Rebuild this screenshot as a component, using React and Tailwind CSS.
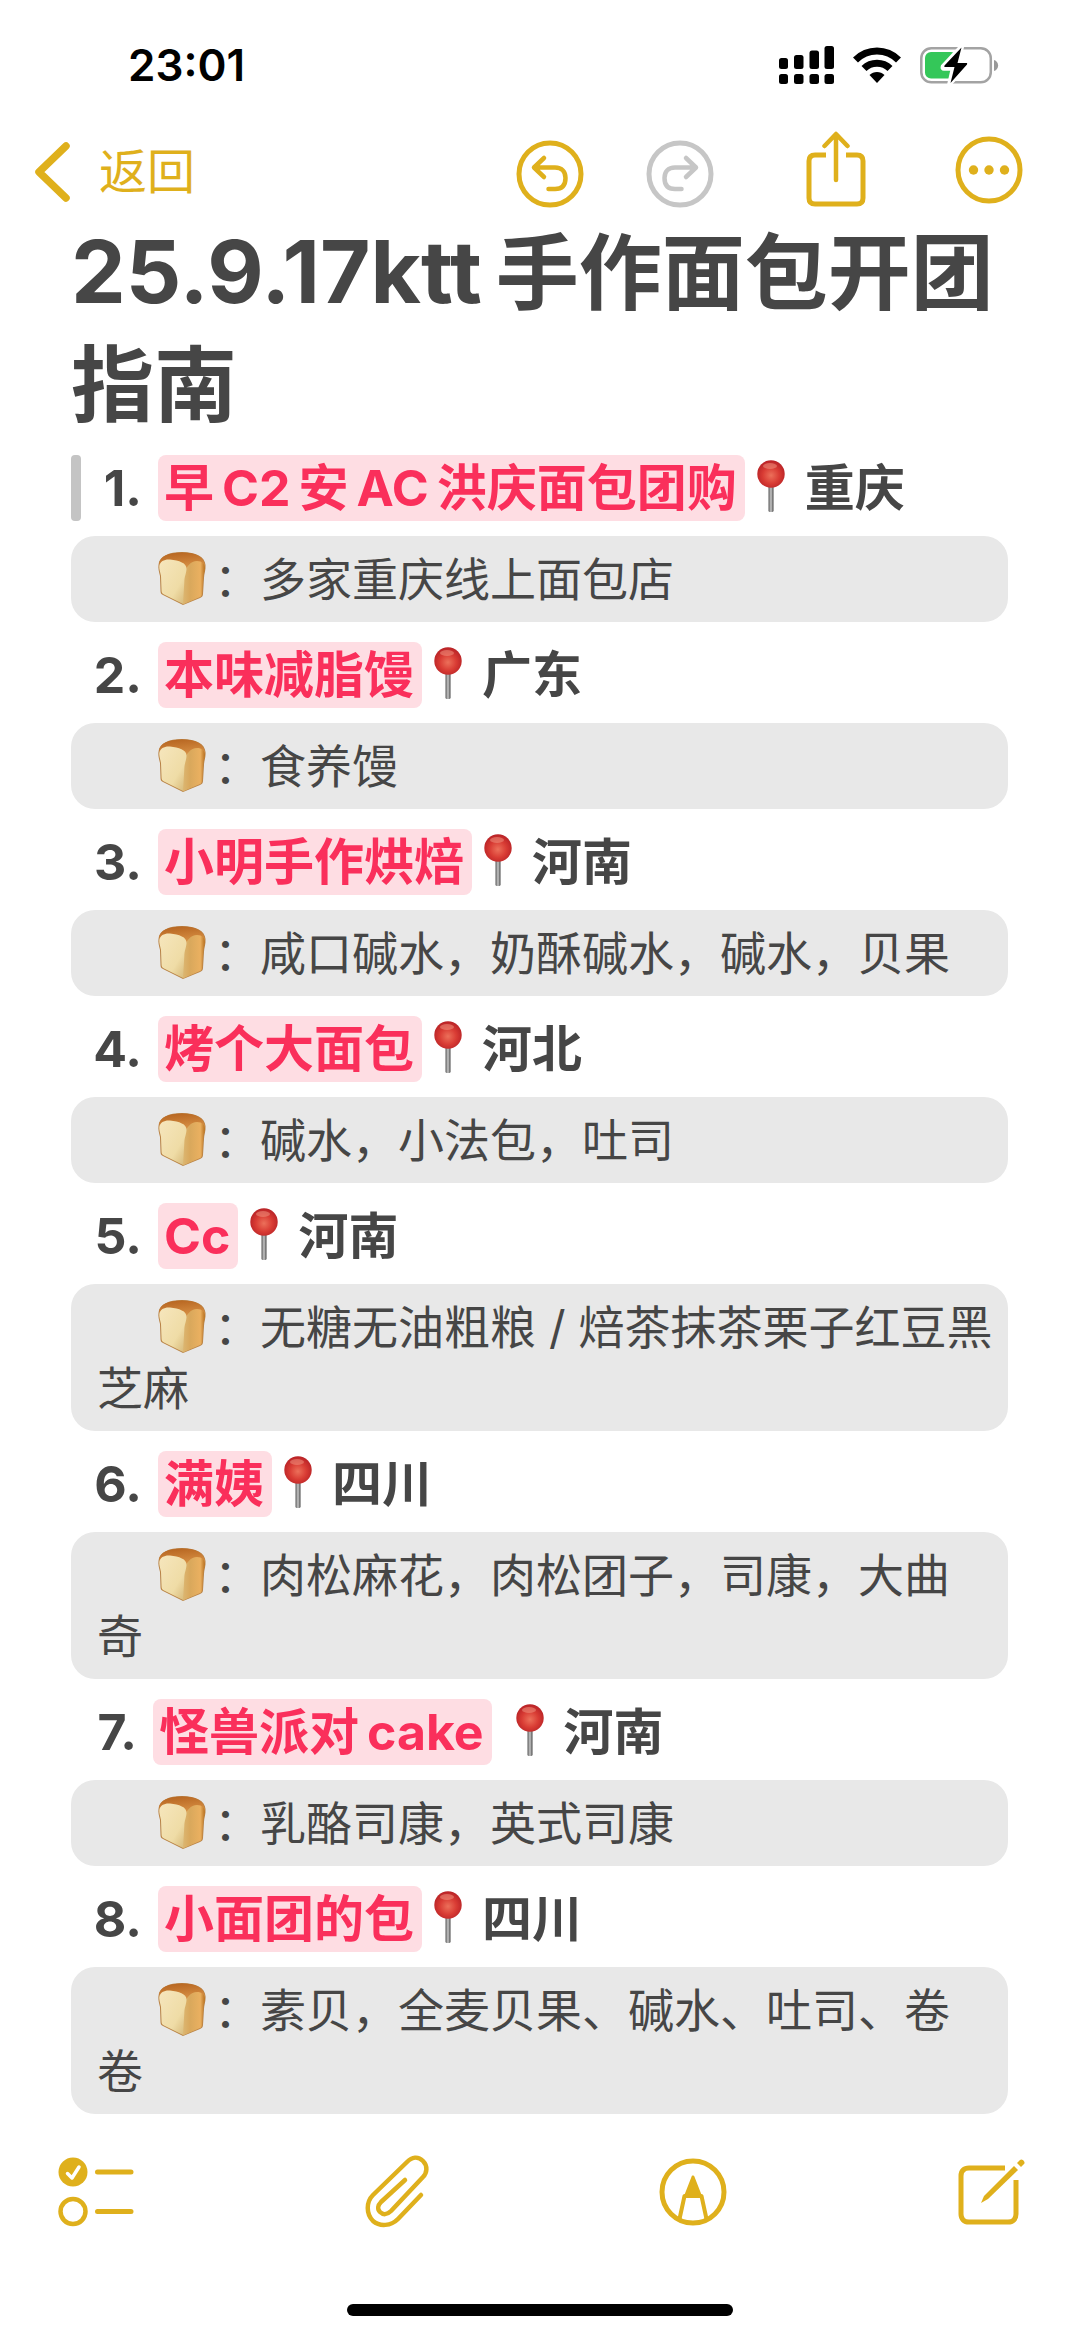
const GOLD = "#dfb01c";

const items = [
  { name: ["早", "C2", "安", "AC", "洪庆面包团购"], place: "重庆", text: "多家重庆线上面包店", quoted: true },
  { name: ["本味减脂馒"], place: "广东", text: "食养馒" },
  { name: ["小明手作烘焙"], place: "河南", text: "咸口碱水，奶酥碱水，碱水，贝果" },
  { name: ["烤个大面包"], place: "河北", text: "碱水，小法包，吐司" },
  { name: ["Cc"], place: "河南", text: "无糖无油粗粮 / 焙茶抹茶栗子红豆黑芝麻" },
  { name: ["满姨"], place: "四川", text: "肉松麻花，肉松团子，司康，大曲奇" },
  { name: ["怪兽派对", "cake"], place: "河南", text: "乳酪司康，英式司康", spaced: true },
  { name: ["小面团的包"], place: "四川", text: "素贝，全麦贝果、碱水、吐司、卷卷" },
];

function Defs() {
  return (
    <svg width="0" height="0" className="absolute" aria-hidden="true">
      <defs>
        <radialGradient id="ball" cx="0.5" cy="0.55" r="0.55">
          <stop offset="0" stopColor="#ec705a" />
          <stop offset="0.55" stopColor="#d93c34" />
          <stop offset="1" stopColor="#b82226" />
        </radialGradient>
        <linearGradient id="needle" x1="0" x2="1" y1="0" y2="0">
          <stop offset="0" stopColor="#555" />
          <stop offset="0.5" stopColor="#c8c8c8" />
          <stop offset="1" stopColor="#444" />
        </linearGradient>
        <linearGradient id="crumb" x1="0" x2="1" y1="0" y2="1">
          <stop offset="0" stopColor="#f6e6bd" />
          <stop offset="0.65" stopColor="#efdca6" />
          <stop offset="1" stopColor="#d4b574" />
        </linearGradient>
        <linearGradient id="side" x1="0" x2="1" y1="0" y2="0">
          <stop offset="0" stopColor="#dcb874" />
          <stop offset="0.35" stopColor="#d9a85c" />
          <stop offset="0.8" stopColor="#eab060" />
          <stop offset="1" stopColor="#b8701f" />
        </linearGradient>
        <linearGradient id="crust" x1="0" x2="0.2" y1="0" y2="1">
          <stop offset="0" stopColor="#b4621e" />
          <stop offset="0.5" stopColor="#cc8138" />
          <stop offset="1" stopColor="#e2a656" />
        </linearGradient>
      </defs>
    </svg>
  );
}

function Pin() {
  return (
    <svg viewBox="0 0 28 52" className="mr-5 mb-1 ml-3 h-[52px] w-7 shrink-0" role="img" aria-label="📍">
      <rect x="11.5" y="26" width="5" height="26" rx="1.5" fill="url(#needle)" />
      <circle cx="14" cy="14" r="13.7" fill="url(#ball)" />
      <ellipse cx="13" cy="6" rx="7" ry="3" fill="#f19a86" opacity="0.5" />
    </svg>
  );
}

function Bread() {
  return (
    <svg viewBox="0 0 48 53" className="mr-2 ml-[61px] inline-block h-[53px] w-12 align-[-9px]" role="img" aria-label="🍞">
      <path d="M0.500 13C1 4 11 0 24 0C38 0 47 5 47.500 13C48 18 46 22 46 26L45 42C45 44 44 45 42 46L25 53L5 43C3 42 2.500 41 2.500 39L2 24C1 20 0 16 0.500 13Z" fill="#b88245" />
      <path d="M1 12C2 4 11 0.500 24 0.500C38 0.500 46 5 46.800 13L46 20L28 24L14 12Z" fill="url(#crust)" />
      <path d="M26 24C27 15 33 9 39 9C44 9 47.500 12 46.800 17C46 21 45.300 23 45.200 26L44.200 42C44 44 43 45 41 45.500L25 52.500L24 30Z" fill="url(#side)" />
      <path d="M1.300 14C2 9 7 7 12 7.500C21 8.500 29 11 28.500 17C28.200 22 26.500 24 26.300 30L25 52L6 42.500C4 41.500 3.500 40 3.500 38L3 24C2.300 20 1 17 1.300 14Z" fill="url(#crumb)" />
    </svg>
  );
}

function StatusIcons() {
  return (
    <div className="flex items-center gap-[19px]">
      <svg width="55" height="38" viewBox="0 0 55 38" role="img" aria-label="信号">
        <rect x="0" y="12" width="9" height="11" rx="2.500" />
        <rect x="15" y="9" width="9.500" height="14" rx="2.500" />
        <rect x="30.500" y="4.500" width="9.500" height="18.500" rx="2.500" />
        <rect x="45.500" y="0" width="9.500" height="23" rx="2.500" />
        <rect x="0" y="28" width="9" height="10" rx="2.500" />
        <rect x="15" y="28" width="9.500" height="10" rx="2.500" />
        <rect x="30.500" y="28" width="9.500" height="10" rx="2.500" />
        <rect x="45.500" y="28" width="9.500" height="10" rx="2.500" />
      </svg>
      <svg width="48" height="36" viewBox="0 0 48 36" role="img" aria-label="无线网络">
        <path d="M2.500 13C14.500 1 33.500 1 45.500 13" fill="none" stroke="#000" strokeWidth="7" />
        <path d="M11 21.500C18 14.500 30 14.500 37 21.500" fill="none" stroke="#000" strokeWidth="7" />
        <path d="M24 36L16.500 28C20.500 24 27.500 24 31.500 28Z" />
      </svg>
      <svg width="79" height="38" viewBox="0 0 79 38" role="img" aria-label="正在充电">
        <rect x="1.300" y="2.300" width="69.500" height="34" rx="10" fill="none" stroke="#a3a3a3" strokeWidth="2.500" />
        <rect x="5" y="6" width="32" height="26.500" rx="6" fill="#34c759" />
        <path d="M74 14C79.500 15.500 79.500 23.500 74 25Z" fill="#999" />
        <path d="M42 0L23 20.500C22.500 22 23 22.500 24 22.500H33L29.500 38L48.500 18C49 16.500 48.500 16 47.500 16H38Z" stroke="#fff" strokeWidth="4.500" />
        <path d="M41.500 1.500L24.500 19.500C24 20.500 24.500 21 25 21H34.500L30.500 37L47 18.500C47.500 17.500 47 17 46.500 17H37.500Z" />
      </svg>
    </div>
  );
}

const stroke = { fill: "none", stroke: "currentColor", strokeWidth: 5, strokeLinecap: "round", strokeLinejoin: "round" };

function Undo() {
  return (
    <svg width="68" height="68" viewBox="0 0 68 68" {...stroke}>
      <circle cx="34" cy="34" r="31" />
      <path d="M28 18L18 27.500L28 37M18 27.500H39C46 27.500 49.500 32 49.500 38C49.500 45 46 49 39 49H32.500" strokeWidth="4.500" />
    </svg>
  );
}

function Item({ index, item }) {
  return (
    <li className="mb-5">
      <h2 className="mb-[15px] flex h-[66px] items-center text-[50px] font-bold">
        <span className={item.quoted ? "h-full w-2.5 rounded bg-[#c4c4c4]" : "w-2.5"} />
        <span className={item.spaced ? "w-14 text-right" : "w-[61px] text-right"}>{index + 1}.</span>
        <span className="ml-4 flex h-full items-center gap-2 rounded-lg bg-[#fedde3] pr-2 pl-1.5 text-[#fa2f5b]">
          {item.name.map((part) => (
            <span key={part}>{part}</span>
          ))}
        </span>
        {item.spaced && <span className="w-3" />}
        <Pin />
        <span>{item.place}</span>
      </h2>
      <p className="rounded-3xl bg-[#e8e8e8] pt-[13px] pr-3.5 pb-3 pl-[26px] text-[46px] leading-[61px]">
        <Bread />：{item.text}
      </p>
    </li>
  );
}

export default function App() {
  return (
    <div className="flex min-h-screen flex-col bg-white font-['Inter','Noto_Sans_CJK_SC',sans-serif] text-[#464646]" lang="zh-CN">
      <Defs />
      <header>
        <div className="flex h-[130px] items-center justify-between pr-[81px] pl-32 text-black">
          <span className="text-[44px] font-semibold">23:01</span>
          <StatusIcons />
        </div>
        <nav className="flex h-[84px] items-center justify-between pr-[57px] pl-[35px]" style={{ color: GOLD }}>
          <a href="#notes" className="flex items-center gap-7 text-[48px]">
            <svg width="36" height="62" viewBox="0 0 36 62" {...stroke} strokeWidth="7.500">
              <path d="M31 5L4 31L31 57" />
            </svg>
            返回
          </a>
          <div className="flex items-center">
            <button type="button" aria-label="撤销" className="mr-[62px] pt-1"><Undo /></button>
            <button type="button" aria-label="重做" className="mr-[92px] -scale-x-100 pt-1 text-[#c6c6c6]"><Undo /></button>
            <button type="button" aria-label="分享" className="mr-[89px] pb-1.5">
              <svg width="60" height="76" viewBox="0 0 60 76" {...stroke}>
                <path d="M20 24H9C5 24 3 26 3 30V67C3 71 5 73 9 73H51C55 73 57 71 57 67V30C57 26 55 24 51 24H40" strokeLinecap="butt" />
                <path d="M30 49V4M18.500 15L30 3L41.500 15" strokeWidth="4.500" />
              </svg>
            </button>
            <button type="button" aria-label="更多" className="pb-1">
              <svg width="68" height="68" viewBox="0 0 68 68" {...stroke}>
                <circle cx="34" cy="34" r="31" />
                <g fill="currentColor" stroke="none">
                  <circle cx="18.500" cy="34" r="4.700" />
                  <circle cx="34" cy="34" r="4.700" />
                  <circle cx="49.500" cy="34" r="4.700" />
                </g>
              </svg>
            </button>
          </div>
        </nav>
      </header>

      <main className="grow pr-[72px] pl-[71px]">
        <h1 className="mt-0.5 mb-3.5 text-[83px] leading-[112px] font-bold">
          <span className="mr-3.5 text-[87px]">25.9.17ktt</span>手作面包开团指南
        </h1>
        <ol>
          {items.map((item, index) => (
            <Item key={item.place + index} index={index} item={item} />
          ))}
        </ol>
      </main>

      <footer className="pt-[18px] pb-5" style={{ color: GOLD }}>
        <div className="flex h-[74px] items-center justify-between pr-[54px] pl-[58px]">
          <button type="button" aria-label="核对清单">
            <svg width="76" height="70" viewBox="0 0 76 70" {...stroke}>
              <circle cx="15" cy="15" r="14.500" fill="currentColor" stroke="none" />
              <path d="M9.500 16.500L14 21L21 10" stroke="#fff" strokeWidth="3.500" />
              <circle cx="15" cy="54.500" r="12.500" strokeWidth="4.500" />
              <path d="M39.500 15H73M39.500 54.500H73" />
            </svg>
          </button>
          <button type="button" aria-label="附件">
            <svg width="64" height="74" viewBox="0 0 64 74" {...stroke} strokeWidth="4.500">
              <path d="M56 40L33 64C26 71 15 72 8 66C1 59 1 47 8 40L42 7C47 2 53 1 58 6C63 11 62 18 58 22L26 56C22 60 18 60 15 57C12 54 13 50 16 47L40 25" />
            </svg>
          </button>
          <button type="button" aria-label="标记">
            <svg width="68" height="68" viewBox="0 0 68 68" {...stroke}>
              <circle cx="34" cy="34" r="31" />
              <path d="M20.500 61L25.500 38H42.500L47.500 61" strokeWidth="4" />
              <path d="M34 19L27 37H41Z" fill="currentColor" strokeWidth="3" />
            </svg>
          </button>
          <button type="button" aria-label="新建备忘录">
            <svg width="68" height="68" viewBox="0 0 68 68" {...stroke}>
              <path d="M47 10H11C6 10 3 13 3 18V56C3 61 6 64 11 64H50C55 64 58 61 58 56V22" strokeLinecap="butt" />
              <path d="M23 45L26 38L56 8L60 12L30 41Z" fill="currentColor" stroke="none" />
              <path d="M59 5L62 2C64 0 68 4 66 6L63 9Z" fill="currentColor" stroke="none" />
            </svg>
          </button>
        </div>
        <div className="mx-auto mt-[75px] h-3 w-[386px] rounded-full bg-black" />
      </footer>
    </div>
  );
}
